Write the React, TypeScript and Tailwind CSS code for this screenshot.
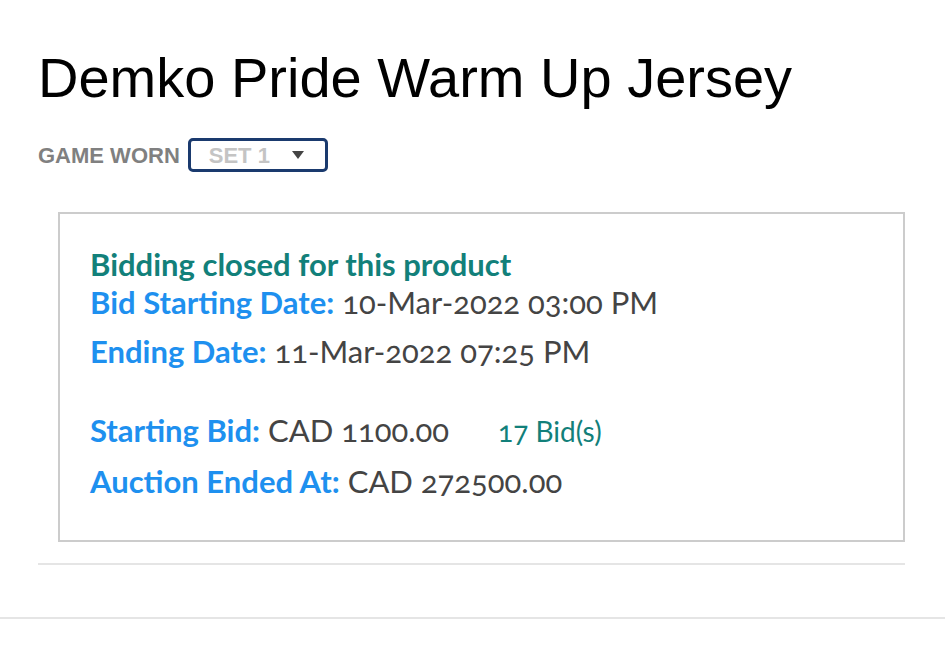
const FONT = { fontFamily: "Lato, 'Open Sans', sans-serif" };

function Row({ label, value, extra }: { label: string; value: string; extra?: string }) {
  return (
    <p className="flex items-baseline text-[31px] leading-[38px]">
      <span className="font-bold text-[#1e90ef]">{label}</span>
      <span className="ml-[8px] text-[#444444] oldstyle-nums">{value}</span>
      {extra && <span className="ml-[49px] text-[28px] text-[#12807a] oldstyle-nums">{extra}</span>}
    </p>
  );
}

export default function App() {
  return (
    <div className="min-h-[648px] bg-white">
      <div className="px-[38px] pt-[46px] pr-[45px]">
        <h1 className="font-['Liberation_Sans',Arial,sans-serif] text-[56px] leading-[64px] text-black">
          Demko Pride Warm Up Jersey
        </h1>

        <div className="mt-[28px] flex items-center font-['Liberation_Sans',Arial,sans-serif]">
          <span className="text-[22px] font-bold text-[#808080]">GAME WORN</span>
          <div className="ml-[8px] flex h-[34px] w-[140px] items-center justify-between rounded-[5px] border-[3px] border-[#1a3a6e] pl-[18px] pr-[21px]">
            <span className="text-[22px] font-bold text-[#c4c4c4]">SET 1</span>
            <span className="h-0 w-0 border-x-[6px] border-t-[8px] border-x-transparent border-t-[#444]" />
          </div>
        </div>

        <div className="ml-[20px] mt-[40px] border-2 border-[#cccccc] px-[30px] pb-[40px] pt-[31px]" style={FONT}>
          <p className="text-[31px] font-bold leading-[38px] text-[#12807a]">Bidding closed for this product</p>
          <div className="flex flex-col gap-[11px]">
            <Row label="Bid Starting Date:" value="10-Mar-2022 03:00 PM" />
            <Row label="Ending Date:" value="11-Mar-2022 07:25 PM" />
          </div>
          <div className="mt-[41px] flex flex-col gap-[12px]">
            <Row label="Starting Bid:" value="CAD 1100.00" extra="17 Bid(s)" />
            <Row label="Auction Ended At:" value="CAD 272500.00" />
          </div>
        </div>

        <div className="mt-[21px] h-[2px] bg-[#e5e5e5]" />
      </div>
      <div className="mt-[52px] h-[2px] w-[945px] bg-[#e5e5e5]" />
    </div>
  );
}
